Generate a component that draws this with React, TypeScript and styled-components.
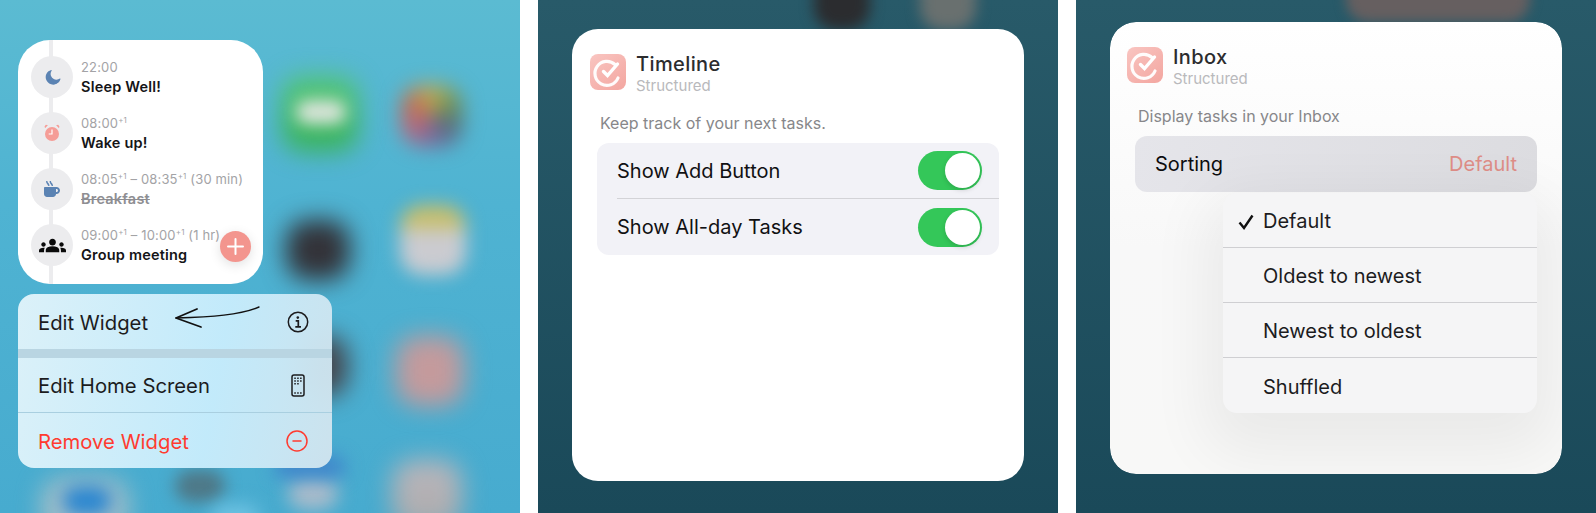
import { createGlobalStyle } from 'styled-components';
import styled from 'styled-components';
import { CircleMinus } from 'lucide-react';
import { FaMoon, FaMugHot } from 'react-icons/fa';
import { MdGroups } from 'react-icons/md';
import { ReactNode } from 'react';

const GlobalStyle = createGlobalStyle`
  html, body {
    margin: 0;
    padding: 0;
    background: #fff;
  }
  body {
    font-family: Inter, "Liberation Sans", sans-serif;
    -webkit-font-smoothing: antialiased;
  }
`;

const Page = styled.div`
  display: flex;
  gap: 18px;
  width: 1596px;
  height: 513px;
  overflow: hidden;
  background: #fff;
`;

const Wallpaper = styled.section`
  position: relative;
  flex: 0 0 520px;
  height: 513px;
  overflow: hidden;
  padding: 40px 0 0 18px;
  box-sizing: border-box;
  background: linear-gradient(180deg, #5bbbd2 0%, #4fb3d2 40%, #47abcf 100%);
`;

const DimPanel = styled.section<{ $pad: string }>`
  position: relative;
  flex: 0 0 520px;
  height: 513px;
  overflow: hidden;
  padding: ${({ $pad }) => $pad};
  box-sizing: border-box;
  background: linear-gradient(180deg, #285a69 0%, #1a4959 100%);
`;

// Blurred home screen icons behind the widget
const Blob = styled.div<{ $x: number; $y: number; $w: number; $h: number; $bg: string; $blur?: number }>`
  position: absolute;
  left: ${({ $x }) => $x}px;
  top: ${({ $y }) => $y}px;
  width: ${({ $w }) => $w}px;
  height: ${({ $h }) => $h}px;
  border-radius: 22px;
  background: ${({ $bg }) => $bg};
  filter: blur(${({ $blur }) => $blur ?? 12}px);
`;

const Widget = styled.div`
  position: relative;
  width: 245px;
  height: 244px;
  border-radius: 32px;
  background: #fff;
  overflow: hidden;
`;

const Rail = styled.div`
  position: absolute;
  left: 31px;
  top: 0;
  bottom: 0;
  width: 4px;
  background: #ececee;
`;

const Timeline = styled.div`
  position: relative;
  display: flex;
  flex-direction: column;
  gap: 14px;
  padding: 16px 0 0 13px;
`;

const Task = styled.div`
  display: flex;
  align-items: center;
  gap: 8px;
  height: 42px;
`;

const Bubble = styled.div`
  flex: 0 0 42px;
  height: 42px;
  display: flex;
  align-items: center;
  justify-content: center;
  border-radius: 50%;
  background: #ececee;
`;

const TaskText = styled.div`
  display: flex;
  flex-direction: column;
  gap: 3px;
  white-space: nowrap;
`;

const TaskTime = styled.div`
  font-size: 13px;
  line-height: 16px;
  letter-spacing: 0.15px;
  color: #a3a3a6;

  sup {
    font-size: 8px;
    line-height: 0;
    vertical-align: 5px;
  }
`;

const TaskTitle = styled.div<{ $done?: boolean }>`
  font-size: 14.500px;
  line-height: 17px;
  letter-spacing: 0.2px;
  font-weight: 600;
  color: ${({ $done }) => ($done ? '#8e8e92' : '#151517')};
  text-decoration: ${({ $done }) => ($done ? 'line-through' : 'none')};
`;

const AddButton = styled.div`
  position: absolute;
  right: 12px;
  bottom: 22px;
  width: 31px;
  height: 31px;
  display: flex;
  align-items: center;
  justify-content: center;
  border-radius: 50%;
  background: #f3958e;
  box-shadow: 0 3px 12px rgba(0, 0, 0, 0.12);
`;

const Menu = styled.div`
  position: relative;
  width: 314px;
  margin-top: 10px;
  border-radius: 16px;
  overflow: hidden;
  background: linear-gradient(100deg, rgba(224, 243, 250, 0.97) 0%, rgba(198, 236, 252, 0.97) 62%, rgba(208, 228, 238, 0.97) 100%);
`;

const MenuRow = styled.div<{ $danger?: boolean; $divider?: boolean }>`
  display: flex;
  align-items: center;
  justify-content: space-between;
  box-sizing: border-box;
  height: 55px;
  padding: 1px 23px 0 20px;
  font-size: 20.300px;
  color: ${({ $danger }) => ($danger ? '#ff3b30' : '#1c1c1e')};
  border-bottom: ${({ $divider }) => ($divider ? '1px solid #a9cfe0' : 'none')};
`;

const MenuGap = styled.div`
  height: 9px;
  background: #b9d5e2;
`;

const Arrow = styled.svg`
  position: absolute;
  left: 0;
  top: 0;
  pointer-events: none;
`;

const ConfigCard = styled.div<{ $tint?: boolean }>`
  position: relative;
  width: 100%;
  height: 452px;
  box-sizing: border-box;
  padding-top: 25px;
  border-radius: 26px;
  background: ${({ $tint }) =>
    $tint ? 'linear-gradient(180deg, #ffffff 0%, #f8f8f8 50%, #f8f8f7 100%)' : '#fff'};
`;

const CardHeader = styled.div<{ $left: number }>`
  display: flex;
  gap: 10px;
  height: 36px;
  padding-left: ${({ $left }) => $left}px;
`;

const AppIcon = styled.div`
  flex: 0 0 36px;
  height: 36px;
  display: flex;
  align-items: center;
  justify-content: center;
  border-radius: 8px;
  background: linear-gradient(140deg, #f9c5c1 0%, #f3a6a0 100%);
`;

const HeaderText = styled.div`
  display: flex;
  flex-direction: column;
  margin-top: -2px;
`;

const CardTitle = styled.div`
  font-size: 20px;
  line-height: 24px;
  font-weight: 500;
  letter-spacing: 0.4px;
  color: #2c2c2e;
`;

const CardApp = styled.div`
  font-size: 15px;
  line-height: 20px;
  color: #b9b9bc;
`;

const CardHint = styled.div<{ $left: number }>`
  margin: 23px 0 10px;
  padding-left: ${({ $left }) => $left}px;
  font-size: 16px;
  line-height: 20px;
  color: #87878a;
`;

const Group = styled.div<{ $width: number }>`
  width: ${({ $width }) => $width}px;
  margin-left: 25px;
  border-radius: 12px;
  overflow: hidden;
  background: #f2f2f7;
`;

const ToggleRow = styled.div<{ $divider?: boolean }>`
  display: flex;
  align-items: center;
  justify-content: space-between;
  box-sizing: border-box;
  height: 56px;
  margin-left: 20px;
  padding-right: 17px;
  font-size: 20px;
  color: #111113;
  border-bottom: ${({ $divider }) => ($divider ? '1px solid #d3d3d7' : 'none')};
`;

const Switch = styled.div`
  position: relative;
  width: 64px;
  height: 39px;
  border-radius: 20px;
  background: #34c759;
`;

const Knob = styled.div`
  position: absolute;
  right: 2px;
  top: 2px;
  width: 35px;
  height: 35px;
  border-radius: 50%;
  background: #fff;
  box-shadow: 0 2px 5px rgba(0, 0, 0, 0.15);
`;

const SortRow = styled.div<{ $width: number }>`
  display: flex;
  align-items: center;
  justify-content: space-between;
  box-sizing: border-box;
  width: ${({ $width }) => $width}px;
  height: 56px;
  margin-left: 25px;
  padding: 0 20px;
  border-radius: 12px;
  font-size: 20px;
  color: #0d0d0f;
  background: linear-gradient(100deg, #e5e5ea 0%, #dcdce0 100%);
`;

const SortValue = styled.span`
  color: #de8d87;
`;

const Dropdown = styled.div`
  position: relative;
  width: 314px;
  margin: 1px 0 0 113px;
  border-radius: 14px;
  overflow: hidden;
  background: #f5f5f6;
  box-shadow: 0 22px 60px 18px rgba(0, 0, 0, 0.06);
`;

const Option = styled.div<{ $divider?: boolean }>`
  position: relative;
  box-sizing: border-box;
  display: flex;
  align-items: center;
  height: 55px;
  padding: 2px 0 0 40px;
  font-size: 20px;
  color: #1c1c1e;
  border-bottom: ${({ $divider }) => ($divider ? '1px solid #cfcfd2' : 'none')};
`;

const CheckMark = styled.svg`
  position: absolute;
  left: 15px;
  top: 21px;
`;

const CardBody = styled.div`
  position: relative;
  border-radius: 26px;
  overflow: hidden;
`;

const PhoneSlot = styled.span`
  display: flex;
  margin-right: 4px;
`;

const AlarmIcon = () => (
  <svg width="16" height="18" viewBox="0 0 16 18">
    <circle cx="8" cy="10" r="7" fill="#f59d97" />
    <path d="M1 4.200 3.900 1.200 1.900.8.600 2.200zM15 4.200 12.100 1.200 14.100.8 15.400 2.200z" fill="#f59d97" />
    <path d="M8 5.500V10H4.700" fill="none" stroke="#fff" strokeWidth="1.200" />
  </svg>
);

const InfoIcon = () => (
  <svg width="22" height="22" viewBox="0 0 22 22" fill="none" stroke="#1c1c1e">
    <circle cx="11" cy="11" r="9.700" strokeWidth="1.500" />
    <circle cx="10.800" cy="6.600" r="1.300" fill="#1c1c1e" stroke="none" />
    <path d="M8.700 9.800H11.300V15.700M8.300 15.800H14" strokeWidth="1.700" />
  </svg>
);

const PhoneIcon = () => (
  <svg width="14" height="23" viewBox="0 0 14 23">
    <rect x="1" y="1" width="12" height="21" rx="2" fill="none" stroke="#1c1c1e" strokeWidth="1.500" />
    <path
      d="M3.300 3.400h1.500v1.500H3.300zM6.200 3.400h1.500v1.500H6.200zM9.100 3.400h1.500v1.500H9.100zM3.300 6.200h1.500v1.500H3.300zM6.200 6.200h1.500v1.500H6.200zM9.100 6.200h1.500v1.500H9.100zM3.300 9h1.500v1.500H3.300zM6.200 9h1.500v1.500H6.200zM3.300 18.300h1.500v1.500H3.300zM6.200 18.300h1.500v1.500H6.200zM9.100 18.300h1.500v1.500H9.100z"
      fill="#1c1c1e"
    />
  </svg>
);

const StructuredLogo = () => (
  <svg width="36" height="36" viewBox="0 0 36 36" fill="none" stroke="#fff" strokeLinecap="round">
    <path d="M25 10.500A12 12 0 1 0 28 24" strokeWidth="3.200" opacity="0.95" />
    <path d="M13.500 17.500 17.500 21.500 27.500 10" strokeWidth="3.400" />
  </svg>
);

const Time = ({ children }: { children: ReactNode }) => <TaskTime>{children}</TaskTime>;

const tasks = [
  {
    icon: <FaMoon size={15} color="#5b83b3" style={{ transform: 'rotate(-25deg)' }} />,
    time: <>22:00</>,
    title: 'Sleep Well!',
  },
  {
    icon: <AlarmIcon />,
    time: (
      <>
        08:00<sup>+1</sup>
      </>
    ),
    title: 'Wake up!',
  },
  {
    icon: <FaMugHot size={16} color="#5b83b3" />,
    time: (
      <>
        08:05<sup>+1</sup> – 08:35<sup>+1</sup> (30 min)
      </>
    ),
    title: 'Breakfast',
    done: true,
  },
  {
    icon: <MdGroups size={27} color="#0a0a0a" />,
    time: (
      <>
        09:00<sup>+1</sup> – 10:00<sup>+1</sup> (1 hr)
      </>
    ),
    title: 'Group meeting',
  },
];

const sortOptions = ['Default', 'Oldest to newest', 'Newest to oldest', 'Shuffled'];

export default function App() {
  return (
    <Page>
      <GlobalStyle />

      <Wallpaper>
        <Blob $x={281} $y={76} $w={78} $h={76} $bg="linear-gradient(180deg, #56c878 0%, #36b059 100%)" />
        <Blob $x={296} $y={100} $w={50} $h={24} $bg="#dbe4da" $blur={8} />
        <Blob $x={401} $y={85} $w={62} $h={62} $bg="conic-gradient(#c2b050, #6c8f55, #556d80, #7a6a9e, #b8687e, #c26a50, #c2b050)" $blur={10} />
        <Blob $x={286} $y={220} $w={64} $h={60} $bg="#333238" />
        <Blob $x={400} $y={205} $w={66} $h={70} $bg="linear-gradient(180deg, #c8be6a 0%, #c8be6a 28%, #cbcbd0 40%, #cbcbd0 100%)" $blur={9} />
        <Blob $x={300} $y={335} $w={48} $h={62} $bg="#44454c" />
        <Blob $x={396} $y={336} $w={68} $h={70} $bg="#c49a9c" />
        <Blob $x={42} $y={478} $w={86} $h={60} $bg="#a7c0c8" />
        <Blob $x={62} $y={486} $w={50} $h={30} $bg="#2a86d0" $blur={9} />
        <Blob $x={175} $y={470} $w={50} $h={32} $bg="#4e7887" $blur={8} />
        <Blob $x={210} $y={504} $w={50} $h={30} $bg="#6dc2e2" $blur={9} />
        <Blob $x={288} $y={476} $w={50} $h={34} $bg="#a9bbcb" $blur={9} />
        <Blob $x={275} $y={456} $w={70} $h={22} $bg="#3f84cb" $blur={9} />
        <Blob $x={392} $y={460} $w={70} $h={70} $bg="linear-gradient(180deg, #bbb6bb 0%, #aaaaac 100%)" />

        <Widget>
          <Rail />
          <Timeline>
            {tasks.map((task) => (
              <Task key={task.title}>
                <Bubble>{task.icon}</Bubble>
                <TaskText>
                  <Time>{task.time}</Time>
                  <TaskTitle $done={task.done}>{task.title}</TaskTitle>
                </TaskText>
              </Task>
            ))}
          </Timeline>
          <AddButton>
            <svg width="17" height="17" viewBox="0 0 17 17">
              <path d="M8.500 1v15M1 8.500h15" stroke="#fff" strokeWidth="2" strokeLinecap="round" />
            </svg>
          </AddButton>
        </Widget>

        <Menu>
          <MenuRow>
            Edit Widget
            <InfoIcon />
          </MenuRow>
          <MenuGap />
          <MenuRow $divider>
            Edit Home Screen
            <PhoneSlot>
              <PhoneIcon />
            </PhoneSlot>
          </MenuRow>
          <MenuRow $danger>
            Remove Widget
            <CircleMinus size={24} strokeWidth={1.500} color="#ff3b30" />
          </MenuRow>
          <Arrow width="314" height="60" viewBox="0 0 314 60" fill="none" stroke="#111" strokeLinecap="round">
            <path d="M241 13C222 21 194 23 158 24" strokeWidth="1.400" />
            <path d="M179 15 158 24 183 33" strokeWidth="1.800" strokeLinejoin="round" />
          </Arrow>
        </Menu>
      </Wallpaper>

      <DimPanel $pad="29px 34px 0">
        <Blob $x={276} $y={-40} $w={56} $h={70} $bg="#2b2c2f" $blur={7} />
        <Blob $x={382} $y={-40} $w={56} $h={70} $bg="#69706f" $blur={7} />
        <ConfigCard>
          <CardHeader $left={18}>
            <AppIcon>
              <StructuredLogo />
            </AppIcon>
            <HeaderText>
              <CardTitle>Timeline</CardTitle>
              <CardApp>Structured</CardApp>
            </HeaderText>
          </CardHeader>
          <CardHint $left={28}>Keep track of your next tasks.</CardHint>
          <Group $width={402}>
            <ToggleRow $divider>
              Show Add Button
              <Switch>
                <Knob />
              </Switch>
            </ToggleRow>
            <ToggleRow>
              Show All-day Tasks
              <Switch>
                <Knob />
              </Switch>
            </ToggleRow>
          </Group>
        </ConfigCard>
      </DimPanel>

      <DimPanel $pad="22px 34px 0">
        <Blob $x={270} $y={-40} $w={184} $h={62} $bg="#665f60" $blur={6} />
        <CardBody>
          <ConfigCard $tint>
            <CardHeader $left={17}>
              <AppIcon>
                <StructuredLogo />
              </AppIcon>
              <HeaderText>
                <CardTitle>Inbox</CardTitle>
                <CardApp>Structured</CardApp>
              </HeaderText>
            </CardHeader>
            <CardHint $left={28}>Display tasks in your Inbox</CardHint>
            <SortRow $width={402}>
              Sorting
              <SortValue>Default</SortValue>
            </SortRow>
            <Dropdown>
              {sortOptions.map((option, i) => (
                <Option key={option} $divider={i < sortOptions.length - 1}>
                  {i === 0 && (
                    <CheckMark width="16" height="16" viewBox="0 0 16 16" fill="none">
                      <path d="M1.500 8.500 6 14 14.500 1.500" stroke="#111" strokeWidth="2.400" />
                    </CheckMark>
                  )}
                  {option}
                </Option>
              ))}
            </Dropdown>
          </ConfigCard>
        </CardBody>
      </DimPanel>
    </Page>
  );
}
